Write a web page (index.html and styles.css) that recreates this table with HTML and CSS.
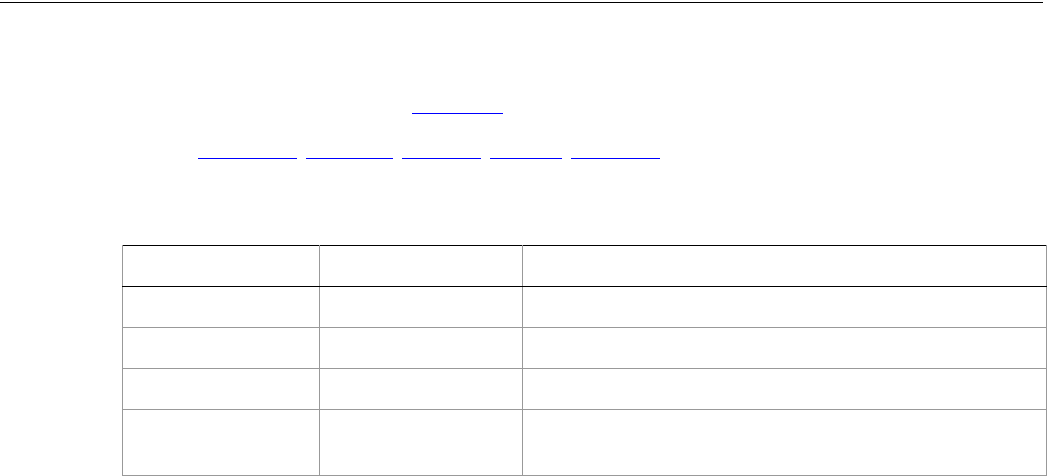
FILE: index.html
```html
<!DOCTYPE html>
<html lang="en">
<head>
<meta charset="utf-8">
<title>Document</title>
<link rel="stylesheet" href="styles.css">
</head>
<body>
<div class="rule"></div>
<div class="top-link">
  <a class="lnk w91" href="#top">Top</a>
</div>
<nav class="links">
  <a class="lnk w99" href="#a">Section A</a>
  <a class="lnk w87" href="#b">Section B</a>
  <a class="lnk w79" href="#c">Section C</a>
  <a class="lnk w72" href="#d">Section D</a>
  <a class="lnk w89" href="#e">Section E</a>
</nav>
<table class="grid">
  <thead>
    <tr><th class="c1"></th><th class="c2"></th><th class="c3"></th></tr>
  </thead>
  <tbody>
    <tr><td></td><td></td><td></td></tr>
    <tr><td></td><td></td><td></td></tr>
    <tr><td></td><td></td><td></td></tr>
    <tr class="tall"><td></td><td></td><td></td></tr>
  </tbody>
</table>
</body>
</html>
```
FILE: styles.css
```css
html, body {
  margin: 0;
  padding: 0;
  background: #fff;
  font-family: "Liberation Sans", Arial, sans-serif;
  font-size: 16px;
}
.rule {
  margin-top: 2px;
  width: 1043px;
  height: 1px;
  background: #000;
}
.top-link {
  display: flex;
  padding-left: 412px;
  margin-top: 92px;
}
.links {
  display: flex;
  gap: 9px;
  padding-left: 198px;
  margin-top: 26px;
}
.lnk {
  display: block;
  height: 18px;
  border-bottom: 1px solid #0000ff;
  color: transparent;
  text-decoration: none;
  font-size: 14px;
  line-height: 18px;
  overflow: hidden;
}
.w91 { width: 91px; }
.w99 { width: 99px; }
.w87 { width: 87px; }
.w79 { width: 79px; }
.w72 { width: 72px; }
.w89 { width: 89px; }
.grid {
  margin-left: 122px;
  margin-top: 86px;
  width: 925px;
  border-collapse: collapse;
  border-top: 1px solid #000;
  border-bottom: 1px solid #000;
}
.grid th, .grid td {
  padding: 0;
  height: 40px;
  border-left: 1px solid #999;
  border-right: 1px solid #999;
  border-bottom: 1px solid #999;
}
.grid thead th {
  border-bottom: 1px solid #000;
}
.grid .c1 { width: 196px; }
.grid .c2 { width: 202px; }
.grid .tall td { height: 65px; }
```
